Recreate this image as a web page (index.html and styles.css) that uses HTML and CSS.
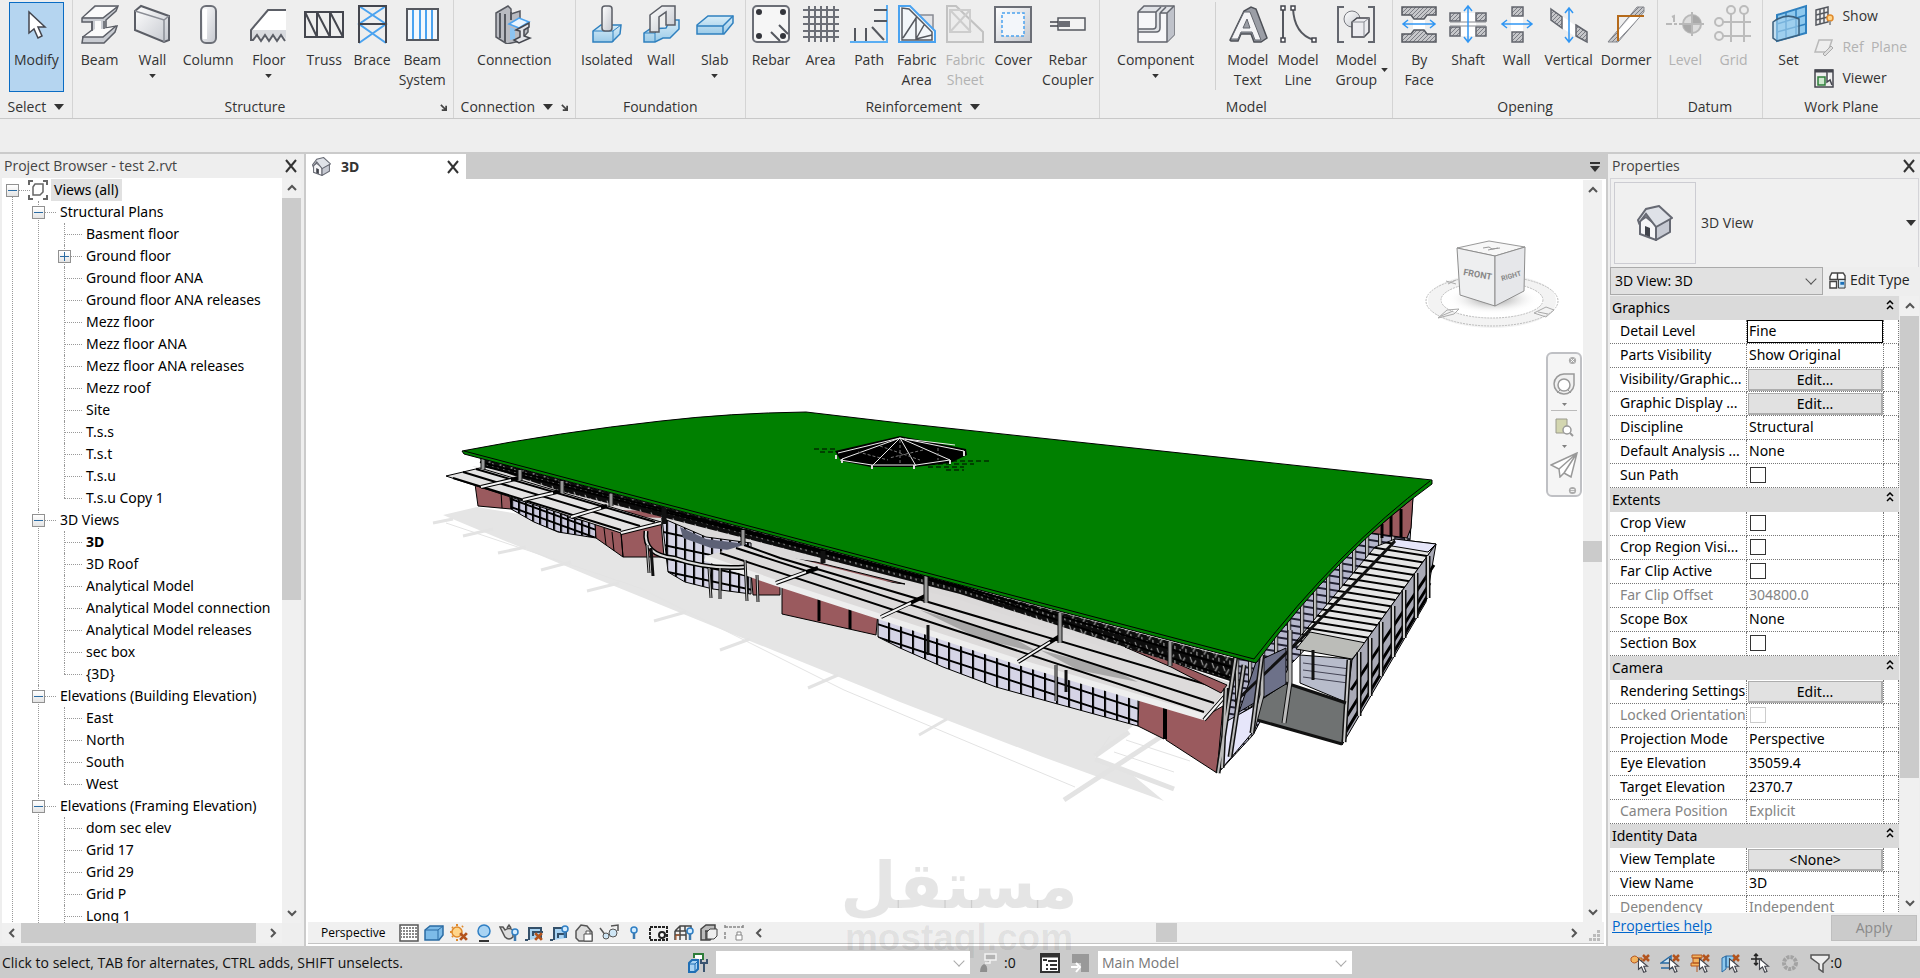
FILE: index.html
```html
<!DOCTYPE html>
<html lang="en">
<head>
  <meta charset="UTF-8">
  <meta name="viewport" content="width=device-width, initial-scale=1.0">
  <title>test 2.rvt - 3D</title>
  <link rel="stylesheet" href="styles.css">
</head>
<body>
  <svg class="defs" aria-hidden="true">
    <defs>
      <linearGradient id="metal" x1="0" y1="0" x2="1" y2="1">
        <stop offset="0" stop-color="#fff"/><stop offset="1" stop-color="#c4c7ce"/>
      </linearGradient>
      <linearGradient id="blue" x1="0" y1="0" x2="0" y2="1">
        <stop offset="0" stop-color="#d8edf8"/><stop offset="1" stop-color="#9ccbe8"/>
      </linearGradient>
      <pattern id="hatch" width="4" height="4" patternUnits="userSpaceOnUse">
        <rect width="4" height="4" fill="#c6c7ca"/><path d="M0 4L4 0" stroke="#7b7d84"/>
      </pattern>
      <symbol id="close" viewBox="0 0 14 14"><path d="M2 1l10 12M12 1L2 13" stroke="#333" stroke-width="2" fill="none"/></symbol>
      <symbol id="up" viewBox="0 0 12 12"><path d="M2 8l4-4 4 4" stroke="#555" stroke-width="2" fill="none"/></symbol>
      <symbol id="down" viewBox="0 0 12 12"><path d="M2 4l4 4 4-4" stroke="#555" stroke-width="2" fill="none"/></symbol>
      <symbol id="left" viewBox="0 0 12 12"><path d="M8 2L4 6l4 4" stroke="#555" stroke-width="2" fill="none"/></symbol>
      <symbol id="right" viewBox="0 0 12 12"><path d="M4 2l4 4-4 4" stroke="#555" stroke-width="2" fill="none"/></symbol>
      <symbol id="caret" viewBox="0 0 10 6"><path d="M0 0h10L5 6z" fill="#333"/></symbol>
      <symbol id="launch" viewBox="0 0 8 8"><path d="M1 1l5 5M7 2v5H2" stroke="#444" stroke-width="2" fill="none"/></symbol>
      <symbol id="collapse" viewBox="0 0 8 10"><path d="M1 4l3-3 3 3M1 9l3-3 3 3" stroke="#000" stroke-width="1.5" fill="none"/></symbol>
      <symbol id="house" viewBox="0 0 36 36">
        <path d="M3 16v13l16 6V20L9 12z" fill="#f6f6f8" stroke="#666973" stroke-width="2"/>
        <path d="M19 20v15l14-8V14z" fill="#c6c9d2" stroke="#666973" stroke-width="2"/>
        <path d="M1 15L9 4 22 1l13 12-16 9L9 9l-7 9z" fill="#dfe2e8" stroke="#666973" stroke-width="2"/>
        <path d="M8 21l5 2v9l-5-2z" fill="#40434b"/>
      </symbol>
      <symbol id="cursor" viewBox="0 0 16 20"><path d="M2 1v14l4-3 3 7 3-1-3-7h5z" fill="#fff" stroke="#44464e" stroke-width="1.5"/></symbol>
      <symbol id="redx" viewBox="0 0 8 8"><path d="M1 1l6 6M7 1L1 7" stroke="#b3541e" stroke-width="2.5"/></symbol>
      <symbol id="bulb" viewBox="0 0 8 14"><circle cx="4" cy="4" r="3" fill="#d3ecff" stroke="#2f7fc4" stroke-width="1.5"/><path d="M4 7v6" stroke="#3b79b0" stroke-width="2.5"/></symbol>
    </defs>
  </svg>

  <!-- Ribbon -->
  <header class="ribbon">
    <section class="panel panel-select">
      <div class="tools">
        <button class="tool active"><svg viewBox="0 0 40 40"><path d="M13 8v21l5-4 4 9 4-2-4-9h7z" fill="#fff" stroke="#44464e" stroke-width="1.5"/></svg><span>Modify</span></button>
      </div>
      <h2>Select <svg class="caret"><use href="#caret"/></svg></h2>
    </section>

    <section class="panel panel-structure">
      <div class="tools">
        <button class="tool"><svg viewBox="0 0 40 40"><path d="M2 14L15 2h23l-2 5-10 9v8l11-2-2 6-11 11H2l1-6 9-7v-8H2z" fill="#c9ccd2" stroke="#5b5e66" stroke-width="1.5"/><path d="M4 13L16 3h20L23 13zM4 33l11-8v-8h6v8l14-2-13 10z" fill="#fafafa"/><path d="M2 14h21L37 3M2 33h21l13-11M12 17v10M24 17v8" fill="none" stroke="#5b5e66" stroke-width="1.5"/></svg><span>Beam</span></button>
        <button class="tool"><svg viewBox="0 0 40 40"><path d="M3 7l6-5 28 10v24l-5 2L3 26z" fill="url(#metal)" stroke="#5b5e66" stroke-width="2"/><path d="M3 7l29 9 5-4M32 16v22" fill="none" stroke="#8b8e96" stroke-width="1.5"/></svg><span>Wall</span><svg class="drop"><use href="#caret"/></svg></button>
        <button class="tool"><svg viewBox="0 0 40 40"><rect x="13" y="2" width="15" height="37" rx="5" fill="url(#metal)" stroke="#6b6e76" stroke-width="2"/><path d="M17 5v30" stroke="#fff" stroke-width="4"/></svg><span>Column</span></button>
        <button class="tool"><svg viewBox="0 0 40 40"><path d="M2 26L18 6h19v20z" fill="#fff"/><path d="M2 26h35v9l-4-4-4 6-4-6-4 6-4-6-4 6-4-6-4 6H2z" fill="#d9dbdf"/><path d="M37 6H19L2 26v10h2l4-5 4 6 4-6 4 6 4-6 4 6 4-6 4 6" fill="none" stroke="#5b5e66" stroke-width="2"/></svg><span>Floor</span><svg class="drop"><use href="#caret"/></svg></button>
        <button class="tool"><svg viewBox="0 0 40 40"><path d="M1 8h38v25H1zM13 8v25M26 8v25M1 8l12 25M13 8l13 25M26 8l13 25" fill="none" stroke="#44464e" stroke-width="2"/></svg><span>Truss</span></button>
        <button class="tool"><svg viewBox="0 0 40 40"><path d="M7 2l27 18L7 39M34 2L7 20l27 19" fill="none" stroke="#4ba3f0" stroke-width="2"/><path d="M7 1v38M34 1v38M7 2h27M7 20h27" stroke="#44464e" stroke-width="2"/></svg><span>Brace</span></button>
        <button class="tool"><svg viewBox="0 0 40 40"><rect x="5" y="5" width="31" height="31" fill="#f4f8fc" stroke="#55585f" stroke-width="2"/><path d="M11 6v29M18 6v29M24 6v29M30 6v29" stroke="#4ba3f0" stroke-width="2"/></svg><span>Beam System</span></button>
      </div>
      <h2>Structure<svg class="launch"><use href="#launch"/></svg></h2>
    </section>

    <section class="panel panel-connection">
      <div class="tools">
        <button class="tool"><svg viewBox="0 0 40 40"><path d="M2 9l12-7 3 3v5l9-3v9l8 5v7l-8 9-13 3L2 33z" fill="#b9bbc1" stroke="#55585f" stroke-width="1.5"/><path d="M6 9v25M11 10v28M17 8v8" stroke="#55585f" stroke-width="2"/><path d="M15 20l10-6 10 4-10 6z" fill="#eaf5ff" stroke="#4ba3f0" stroke-width="1.5"/><path d="M16 23l5 2v10l-5 1z" fill="#8cc4f2"/><path d="M22 26l13-7v4l-5 3v6l6 2-11 5-5-3 6-3v-6z" fill="#e2e3e7" stroke="#44464e" stroke-width="1.5"/></svg><span>Connection</span></button>
      </div>
      <h2>Connection <svg class="caret"><use href="#caret"/></svg><svg class="launch"><use href="#launch"/></svg></h2>
    </section>

    <section class="panel panel-foundation">
      <div class="tools">
        <button class="tool"><svg viewBox="0 0 40 40"><path d="M6 27l8-6h20l-1 9-8 8H6z" fill="url(#blue)" stroke="#2f80bf" stroke-width="1.5"/><path d="M6 27h20l8-6M26 27v11" fill="none" stroke="#2f80bf"/><rect x="15" y="2" width="10" height="25" rx="3" fill="url(#metal)" stroke="#5b5e66" stroke-width="1.5"/></svg><span>Isolated</span></button>
        <button class="tool"><svg viewBox="0 0 40 40"><path d="M3 29l6-4 16-1 4-8h9v9l-9 9h-7l-8 4H3z" fill="url(#blue)" stroke="#2f80bf" stroke-width="1.5"/><path d="M3 29h11l5-5M14 29v9" fill="none" stroke="#2f80bf"/><path d="M9 11L21 2h13v19h-9V8l-7 5v15h-9z" fill="url(#metal)" stroke="#5b5e66" stroke-width="1.5"/></svg><span>Wall</span></button>
        <button class="tool"><svg viewBox="0 0 40 40"><path d="M2 21l11-9h25v7l-9 11H2z" fill="url(#blue)" stroke="#2f80bf" stroke-width="1.5"/><path d="M2 22h26l10-10M28 22v8" fill="none" stroke="#2f80bf" stroke-width="1.5"/></svg><span>Slab</span><svg class="drop"><use href="#caret"/></svg></button>
      </div>
      <h2>Foundation</h2>
    </section>

    <section class="panel panel-reinforcement">
      <div class="tools">
        <button class="tool"><svg viewBox="0 0 40 40"><rect x="2" y="2" width="36" height="36" rx="4" fill="#f6f6f6" stroke="#6b6e76" stroke-width="2"/><path d="M28 21l9 9M20 28l9 9" stroke="#55585f" stroke-width="2"/><g fill="#33353b"><circle cx="8" cy="8" r="3"/><circle cx="32" cy="8" r="3"/><circle cx="8" cy="32" r="3"/><circle cx="32" cy="32" r="3"/></g></svg><span>Rebar</span></button>
        <button class="tool"><svg viewBox="0 0 40 40"><path d="M2 6h36M2 13h36M2 20h36M2 27h36M2 33h36M8 2v36M14 2v36M20 2v36M26 2v36M33 2v36" stroke="#6b6e76" stroke-width="2"/></svg><span>Area</span></button>
        <button class="tool"><svg viewBox="0 0 40 40"><path d="M38 1v37H1" fill="none" stroke="#5aaef3" stroke-width="2"/><path d="M25 6h13M25 17h13M6 24v13M17 24v13M23 23l12 13" stroke="#55585f" stroke-width="2"/></svg><span>Path</span></button>
        <button class="tool"><svg viewBox="0 0 40 40"><path d="M17 11h19v26H17z" fill="#e4e5e8" stroke="#888b92" stroke-width="1.5"/><path d="M2 2h11l25 25v11H2z" fill="#f2f6fa" stroke="#4ba3f0" stroke-width="2"/><path d="M5 4v32h30v-8L12 5zM6 34L19 14v21L35 31M19 35l8-14" fill="none" stroke="#55585f" stroke-width="1.5"/></svg><span>Fabric Area</span></button>
        <button class="tool" disabled><svg viewBox="0 0 40 40"><path d="M2 2h9l27 26v10H2z" fill="#ececec" stroke="#c2c2c2" stroke-width="2"/><path d="M5 6h20v22H5zM5 28L25 6M6 7l20 21" fill="none" stroke="#cdcdcd" stroke-width="2"/></svg><span>Fabric Sheet</span></button>
        <button class="tool"><svg viewBox="0 0 40 40"><rect x="2" y="3" width="36" height="35" fill="url(#metal)" stroke="#6b6e76" stroke-width="2"/><rect x="9" y="9" width="22" height="23" fill="#f3f6fa" stroke="#4ba3f0" stroke-width="1.5" stroke-dasharray="3 2"/></svg><span>Cover</span></button>
        <button class="tool"><svg viewBox="0 0 40 40"><rect x="10" y="14" width="27" height="12" fill="#f3f3f3" stroke="#55585f" stroke-width="1.5"/><path d="M2 18h9M2 22h9" stroke="#44464e" stroke-width="1.5"/><rect x="10" y="17" width="12" height="6" fill="#6b6d74"/></svg><span>Rebar Coupler</span></button>
      </div>
      <h2>Reinforcement <svg class="caret"><use href="#caret"/></svg></h2>
    </section>

    <section class="panel panel-model">
      <div class="tools">
        <button class="tool"><svg viewBox="0 0 40 40"><path d="M2 8l6-6h30v29l-7 7H2z" fill="#e0e2e6" stroke="#63666e" stroke-width="1.5"/><path d="M31 10l7-8v29l-7 7z" fill="#bfc2ca"/><path d="M3 9h16v15H3zM3 28h18q3 0 3-3V10h7v27H3z" fill="#f6f6f8"/><path d="M2 8h18l5-5M20 8v14q0 3-3 3H2M24 9l6-6M24 9h7l7-7M24 9v15q0 4-4 4H2M31 9v29" fill="none" stroke="#63666e" stroke-width="1.5"/></svg><span>Component</span><svg class="drop"><use href="#caret"/></svg></button>
        <i class="split"></i>
        <button class="tool"><svg viewBox="0 0 40 40"><path d="M2 36L16 7l7-4 5 2 11 29-6 4h-7l-3-8H13l-3 7H3z" fill="#9b9ea6" stroke="#4d5057" stroke-width="1.5"/><path d="M3 35L16 8h6l11 28h-6l-3-8H13l-3 7zM15 24h7l-3-9z" fill="#f4f4f6" stroke="#63666e" fill-rule="evenodd"/></svg><span>Model Text</span></button>
        <button class="tool"><svg viewBox="0 0 40 40"><path d="M5 4v32M15 4q1 26 21 32" fill="none" stroke="#55585f" stroke-width="2"/><path d="M3 2h4v4H3zM3 34h4v4H3zM13 2h4v4h-4zM34 34h4v4h-4z" fill="#fff" stroke="#44464e" stroke-width="1.5"/></svg><span>Model Line</span></button>
        <button class="tool side"><svg viewBox="0 0 40 40"><path d="M8 3H2v35h6M32 3h6v35h-6" fill="none" stroke="#63666e" stroke-width="2"/><circle cx="16" cy="15" r="8" fill="url(#metal)" stroke="#77797f"/><path d="M16 18l5-4h12v14l-5 5H16z" fill="#ececf0" stroke="#44464e" stroke-width="1.5"/><path d="M16 18h12l5-4M28 18v15" fill="none" stroke="#888b92"/></svg><span>Model Group</span><svg class="drop"><use href="#caret"/></svg></button>
      </div>
      <h2>Model</h2>
    </section>

    <section class="panel panel-opening">
      <div class="tools">
        <button class="tool"><svg viewBox="0 0 40 40"><path d="M14 12h12v17H14z" fill="#fff"/><path d="M3 3h34v8h-9l-3 4H15l-3-4H3zM3 38h34v-8h-9l-3-4H15l-3 4H3z" fill="url(#hatch)" stroke="#55585f" stroke-width="1.5"/><path d="M5 20h30M9 16l-5 4 5 4M31 16l5 4-5 4" fill="none" stroke="#3096f3" stroke-width="1.5"/></svg><span>By<br>Face</span></button>
        <button class="tool"><svg viewBox="0 0 40 40"><path d="M12 9h16v23H12z" fill="#fff"/><path d="M2 9h10v8H2zM28 9h10v8H28zM2 23h10v9H2zM28 23h10v9H28z" fill="url(#hatch)" stroke="#63666e" stroke-width="1.5"/><path d="M2 18h36M2 22h36" stroke="#85878d"/><path d="M20 3v35M16 7l4-5 4 5M16 33l4 5 4-5" fill="none" stroke="#3096f3" stroke-width="1.5"/></svg><span>Shaft</span></button>
        <button class="tool"><svg viewBox="0 0 40 40"><path d="M14 3h12v35H14z" fill="#fff"/><path d="M15 3h11v9H15zM15 28h11v10H15z" fill="url(#hatch)" stroke="#63666e" stroke-width="1.5"/><path d="M6 20h28M10 16l-5 4 5 4M30 16l5 4-5 4" fill="none" stroke="#3096f3" stroke-width="1.5"/></svg><span>Wall</span></button>
        <button class="tool"><svg viewBox="0 0 40 40"><path d="M13 12l14 10v11L13 24z" fill="#fff"/><path d="M2 5l11 8v11L2 16zM27 21l11 7v10l-11-6z" fill="url(#hatch)" stroke="#63666e" stroke-width="1.5"/><path d="M20 5v33M16 9l4-5 4 5M16 33l4 5 4-5" fill="none" stroke="#3096f3" stroke-width="1.5"/></svg><span>Vertical</span></button>
        <button class="tool"><svg viewBox="0 0 40 40"><path d="M2 38L31 3h7v5L12 38z" fill="url(#hatch)" stroke="#85878d"/><path d="M12 27l14-16h9L13 35z" fill="#fff"/><path d="M12 37V12h26" fill="none" stroke="#b56a1a" stroke-width="2"/></svg><span>Dormer</span></button>
      </div>
      <h2>Opening</h2>
    </section>

    <section class="panel panel-datum">
      <div class="tools">
        <button class="tool" disabled><svg viewBox="0 0 40 40"><circle cx="27" cy="20" r="9" fill="#ddd" stroke="#b9b9b9" stroke-width="2"/><path d="M27 20v-9a9 9 0 019 9zM27 20v9a9 9 0 01-9-9z" fill="#a9a9a9"/><path d="M1 20h6M9 20h3M14 20h25M27 8v24M7 13l2-1v6" fill="none" stroke="#b9b9b9" stroke-width="2"/></svg><span>Level</span></button>
        <button class="tool" disabled><svg viewBox="0 0 40 40"><path d="M10 18h28M10 32h28M18 10v28M31 10v28" stroke="#bcbcbc" stroke-width="2"/><g fill="#eee" stroke="#bcbcbc" stroke-width="2"><circle cx="18" cy="6" r="4"/><circle cx="31" cy="6" r="4"/><circle cx="6" cy="18" r="4"/><circle cx="6" cy="32" r="4"/></g></svg><span>Grid</span></button>
      </div>
      <h2>Datum</h2>
    </section>

    <section class="panel panel-plane">
      <div class="tools">
        <button class="tool"><svg viewBox="0 0 40 40"><path d="M8 11l29-9v27L8 37z" fill="#8ec9ee" stroke="#2f80bf" stroke-width="2"/><path d="M8 20l29-9M8 28l29-8M17 8v26M27 5v26" stroke="#2f80bf" stroke-width="1.5"/><path d="M4 18q13-10 26-3v16L8 37l-4-3z" fill="#a9d4ee" fill-opacity=".6" stroke="#3b5f7c" stroke-width="1.5"/></svg><span>Set</span></button>
        <div class="small-tools">
          <button><svg viewBox="0 0 20 20"><path d="M2 4l12-3v15L2 19zM2 9l12-3M2 14l12-3M6 3v15M10 2v15" fill="#eee" stroke="#55585f" stroke-width="1.5"/><circle cx="16" cy="12" r="3" fill="#ffd58a" stroke="#e08a2c" stroke-width="1.5"/><path d="M16 15v4" stroke="#999" stroke-width="2"/></svg>Show</button>
          <button disabled><svg viewBox="0 0 20 20"><path d="M5 3h13l-4 12H1z" fill="#eee" stroke="#b9b9b9" stroke-width="1.5"/><path d="M9 17l8-8 2 2-8 8z" fill="#ddd" stroke="#aaa"/></svg>Ref&nbsp; Plane</button>
          <button><svg viewBox="0 0 20 20"><path d="M1 2h18v17H1z" fill="#eee" stroke="#44464e" stroke-width="1.5"/><path d="M1 3h18" stroke="#44464e" stroke-width="3"/><path d="M4 9h7v8H4z" fill="#cfe8cf" stroke="#2e7d3a" stroke-width="1.5"/><path d="M13 3v11l3-2 2 5" fill="#fff" stroke="#44464e" stroke-width="1.5"/></svg>Viewer</button>
        </div>
      </div>
      <h2>Work Plane</h2>
    </section>
  </header>
  <div class="option-bar"></div>

  <main class="workspace">
    <!-- Project browser -->
    <aside class="browser">
      <div class="title-bar"><h1>Project Browser - test 2.rvt</h1><button class="close" aria-label="Close browser"><svg><use href="#close"/></svg></button></div>
      <div class="browser-body">
        <ul class="tree">
          <li class="root">
            <button class="toggle" aria-label="Collapse"></button>
            <div class="row"><svg class="views-icon" viewBox="0 0 20 20"><path d="M1 5V1h4M15 1h4v4M19 15v4h-4M5 19H1v-4" fill="none" stroke="#666" stroke-width="2"/><path d="M5 7l2-3h8v8l-3 3H5z" fill="#fff" stroke="#666" stroke-width="1.5"/></svg><span class="selected">Views (all)</span></div>
            <ul>
              <li><button class="toggle" aria-label="Collapse"></button><div class="row">Structural Plans</div>
                <ul>
                  <li>Basment floor</li>
                  <li><button class="toggle plus" aria-label="Expand"></button>Ground floor</li>
                  <li>Ground floor ANA</li>
                  <li>Ground floor ANA releases</li>
                  <li>Mezz floor</li>
                  <li>Mezz floor ANA</li>
                  <li>Mezz floor ANA releases</li>
                  <li>Mezz roof</li>
                  <li>Site</li>
                  <li>T.s.s</li>
                  <li>T.s.t</li>
                  <li>T.s.u</li>
                  <li>T.s.u Copy 1</li>
                </ul>
              </li>
              <li><button class="toggle" aria-label="Collapse"></button><div class="row">3D Views</div>
                <ul>
                  <li><b>3D</b></li>
                  <li>3D Roof</li>
                  <li>Analytical Model</li>
                  <li>Analytical Model connection</li>
                  <li>Analytical Model releases</li>
                  <li>sec box</li>
                  <li>{3D}</li>
                </ul>
              </li>
              <li><button class="toggle" aria-label="Collapse"></button><div class="row">Elevations (Building Elevation)</div>
                <ul>
                  <li>East</li>
                  <li>North</li>
                  <li>South</li>
                  <li>West</li>
                </ul>
              </li>
              <li class="open-end"><button class="toggle" aria-label="Collapse"></button><div class="row">Elevations (Framing Elevation)</div>
                <ul>
                  <li>dom sec elev</li>
                  <li>Grid 17</li>
                  <li>Grid 29</li>
                  <li>Grid P</li>
                  <li>Long 1</li>
                </ul>
              </li>
            </ul>
          </li>
        </ul>
        <div class="vscroll"><button aria-label="Scroll up"><svg><use href="#up"/></svg></button><div class="track"><i class="thumb"></i></div><button aria-label="Scroll down"><svg><use href="#down"/></svg></button></div>
      </div>
      <div class="hscroll"><button aria-label="Scroll left"><svg><use href="#left"/></svg></button><div class="track"><i class="thumb"></i></div><button aria-label="Scroll right"><svg><use href="#right"/></svg></button></div>
    </aside>

    <!-- Drawing area -->
    <section class="view">
      <div class="tabs">
        <div class="tab"><svg class="tab-icon"><use href="#house"/></svg><b>3D</b><button class="close" aria-label="Close view"><svg><use href="#close"/></svg></button></div>
        <button class="tab-menu" aria-label="Open views"><svg viewBox="0 0 12 10"><path d="M1 1h10" stroke="#333" stroke-width="2"/><path d="M1 4h10l-5 6z" fill="#333"/></svg></button>
      </div>
      <div class="view-body">
        <div class="canvas">
          <svg class="model" viewBox="308 180 1275 742" role="img" aria-label="3D model of the building">
            <defs>
              <pattern id="glassA" width="7" height="8" patternUnits="userSpaceOnUse" patternTransform="skewY(20)"><rect width="7" height="8" fill="#000"/><path d="M2 2h5v6H2z" fill="#c9c8dc"/></pattern>
              <pattern id="glassB" width="9" height="13" patternUnits="userSpaceOnUse" patternTransform="skewY(12)"><rect width="9" height="13" fill="#000"/><path d="M2 2h7v11H2z" fill="#d5d4e6"/></pattern>
              <pattern id="glassC" width="12" height="13" patternUnits="userSpaceOnUse" patternTransform="skewY(18)"><rect width="12" height="13" fill="#000"/><path d="M2 2h10v11H2z" fill="#d5d4e6"/></pattern>
              <pattern id="slats" width="40" height="7" patternUnits="userSpaceOnUse" patternTransform="skewY(9)"><rect width="40" height="7" fill="#e6e6e6"/><path d="M0 1h40" stroke="#000" stroke-width="2"/></pattern>
              <pattern id="side" width="13" height="7" patternUnits="userSpaceOnUse" patternTransform="skewY(9)"><rect width="13" height="7" fill="#b5b6cc"/><path d="M0 1h13" stroke="#223" stroke-width="2"/><path d="M2 0v7" stroke="#111" stroke-width="4"/><path d="M2 0v7" stroke="#ccc" stroke-width="2"/></pattern>
              <pattern id="truss" width="11" height="14" patternUnits="userSpaceOnUse" patternTransform="skewY(15)"><rect width="11" height="14" fill="#0c0c0c"/><path d="M2 2l2 5M8 4l-3 6M9 9v4M3 11v2" stroke="#bbb" stroke-width="1"/></pattern>
              <radialGradient id="cubeShadow"><stop offset="0" stop-color="#888"/><stop offset="1" stop-color="#fff" stop-opacity="0"/></radialGradient>
            </defs>
            <!-- ground shadow -->
            <path d="M443 515L477 507 700 545 1140 720 1095 757 1129 772 1164 801 1043 757 900 702 871 690 592 577z" fill="#e5e5e5"/>
            <path d="M446 523L640 588 844 690 1075 787M1110 736l-12 17M1126 740l64 21M1114 752l60 20" fill="none" stroke="#e3e3e3" stroke-width="1"/>
            <path d="M433 523l20-4M463 536l30-7M498 553l28-6M541 570l30-8M587 591l32-8M654 621l32-9M720 650l30-11M808 688l30-13M919 735l28-16" fill="none" stroke="#e3e3e3" stroke-width="3"/>
            <path d="M1064 800l101-66M1095 759l79 30M1129 732l-34 24" fill="none" stroke="#e3e3e3" stroke-width="5"/>
            <!-- annex and right side -->
            <g stroke="#000">
              <path d="M1234 658L1413 495 1410 540 1353 600 1290 665 1253 735 1218 773z" fill="url(#side)"/>
              <path d="M1371 533L1413 498 1411 528 1407 538z" fill="#9a5a5e"/>
              <path d="M1382 524v14M1391 516v20M1401 509v28" stroke-width="3"/>
              <path d="M1239 715L1286 683 1346 703 1342 744 1257 720z" fill="#6f7272"/>
              <path d="M1239 712L1256 662 1286 648 1286 684z" fill="#6d7189"/>
              <path d="M1220 725l36-20-4 28-34 40z" fill="#e6e6fa"/>
              <path d="M1300 655l52 4-4 44-48-20z" fill="#b8bccb"/>
              <path d="M1303 663l47 6M1303 670l46 6M1303 677l45 6" stroke="#445" />
              <path d="M1375 547L1395 539 1436 544 1352 660 1293 645z" fill="url(#slats)"/>
              <path d="M1310 632l56 11-14 16-56-10z" fill="#bbbcb8"/>
              <path d="M1395 539l41 5-8 8-36-6z" fill="#e6e6fa"/>
              <path d="M1436 544L1426 602 1342 745 1352 660z" fill="#a9aab6"/>
            </g>
            <path d="M1434 565L1351 690M1430 583L1347 716M1428 595L1344 735" stroke="#000" stroke-width="3"/>
            <path d="M1428 556v42M1416 573v45M1404 590v48M1393 606v51M1381 622v54M1370 638v58M1359 652v64M1349 660l-5 82" stroke="#111" stroke-width="5"/>
            <path d="M1428 556v42M1416 573v45M1404 590v48M1393 606v51M1381 622v54M1370 638v58M1359 652v64M1349 660l-5 82" stroke="#ccc" stroke-width="2"/>
            <path d="M1257 720l85 24M1286 683l60 20M1313 650v30M1235 702L1300 640 1395 541" fill="none" stroke="#111" stroke-width="3"/>
            <path d="M1290 630v52l-6 41M1262 655v40l-10 38" fill="none" stroke="#111" stroke-width="5"/>
            <path d="M1290 630v52l-6 41M1262 655v40l-10 38" fill="none" stroke="#bbb" stroke-width="3"/>
            <!-- walls and glazing -->
            <g stroke="#000" stroke-width="1">
              <path d="M472 466L550 480 700 505 1232 683 1204 717 881 617 660 540z" fill="#dbd9d9" stroke="none"/>
              <path d="M475 484L510 496 511 509 478 506zM501 491l1 17" fill="#9a5a5e"/>
              <path d="M510 494L535 502 571 518 595 523 596 538 558 532 534 522 511 509z" fill="url(#glassA)"/>
              <path d="M595 522L621 533 623 557 596 538zM621 532L661 522 664 557 623 557zM604 528l2 17M612 532l2 19" fill="#9a5a5e"/>
              <path d="M617 510l44 1 0 7-40-2z" fill="#9a5a5e" stroke="none"/>
              <path d="M662 518L706 537 751 543 751 594 713 589 685 582 668 572z" fill="url(#glassB)"/>
              <path d="M680 527l26 12 41 5v8l-36-4-28-10z" fill="#5d6176" stroke="none"/>
              <path d="M751 572L780 582V595H753z" fill="#9a5a5e"/>
              <path d="M782 583L878 612 876 635 782 614z" fill="#9a5a5e"/>
              <path d="M819 595v26M850 604v25" stroke-width="3"/>
              <path d="M780 557L816 562 905 584 870 580 780 564z" fill="#9a5a5e"/>
              <path d="M878 612L1018 661 1138 696 1138 726 1054 703 996 687 943 667 900 648 878 637z" fill="url(#glassC)"/>
              <path d="M1139 697L1164 704V739L1138 726zM1166 705L1204 717 1223 706 1217 773 1166 740z" fill="#9a5a5e"/>
              <path d="M1165 704v35" stroke-width="4"/>
            </g>
            <!-- canopies -->
            <path d="M446 476L480 468 661 522 621 533z" fill="#e4e3e3" stroke="#000"/>
            <path d="M706 556L744 545 960 600 1225 687 1204 717 1018 661 881 616 776 583z" fill="#dddbdb"/>
            <path d="M705 558L776 583 881 617 1018 662 1204 717" fill="none" stroke="#eee" stroke-width="6"/>
            <path d="M920 610l90 26 30 17-60-14zM1040 650l70 18 28 14-60-12z" fill="#a9a8a8"/>
            <path d="M453 478L621 530M463 472L640 526M476 469L655 522M720 553L1204 712M736 548L1214 703M744 545L780 558L1225 690" fill="none" stroke="#000" stroke-width="2"/>
            <path d="M481 487l38-9M523 500l38-9M571 517l36-11M621 533l40-10M776 583l42-15M881 617l44-21M1018 662l42-26M1204 720l28-32" stroke="#000" stroke-width="4"/>
            <path d="M481 487l30-7M523 500l30-7M571 517l30-9M621 533l40-10M776 583l30-11M881 617l30-14M1018 662l32-20M1204 720l28-32" stroke="#f4f4f4" stroke-width="2"/>
            <path d="M1125 647l46 14 56 24-6 8-50-26z" fill="#9a5a5e" stroke="#000"/>
            <!-- roof truss -->
            <path d="M480 458L1236 659 1230 681 960 594 744 538 560 491 482 465z" fill="url(#truss)"/>
            <path d="M483 466L700 521 960 588 1232 678M480 462L960 586 1234 668" fill="none" stroke="#000" stroke-width="2"/>
            <path d="M483 459v10M520 470v10M562 481v12M611 494v12M664 508v16M743 530v15M823 551v12M926 575v28M1060 613v30M1170 642v24" stroke="#111" stroke-width="5"/>
            <path d="M483 459v10M520 470v10M562 481v12M611 494v12M743 530v15M926 575v28M1060 613v30M1170 642v24" stroke="#999" stroke-width="3"/>
            <!-- entrance canopy -->
            <path d="M646 531q-3 24 28 27 34 12 72 9" fill="none" stroke="#000" stroke-width="5"/>
            <path d="M646 531q-3 24 28 27 34 12 72 9" fill="none" stroke="#ddd" stroke-width="2"/>
            <path d="M647 545l2 28M651 548l2 28M709 568l2 30M720 568v31M745 560l2 41M757 575l1 27M928 625v30M1056 665v36M1066 670v22" stroke="#111" stroke-width="3"/>
            <path d="M647 545l2 28M709 568l2 30M720 568v31M745 560l2 41M757 575l1 27M1056 665v36" stroke="#ccc" stroke-width="1"/>
            <!-- corner columns -->
            <path d="M1236 655l-18 118M1226 688l-4 80M1244 665l-14 92M1262 655l-10 78" stroke="#111" stroke-width="5"/>
            <path d="M1236 655l-18 118M1226 688l-4 80M1244 665l-14 92M1262 655l-10 78" stroke="#bbb" stroke-width="2"/>
            <!-- roof -->
            <path d="M462 451Q560 432 661 421 730 413 806 412L900 423 1432 480V484Q1340 550 1256 663L464 454z" fill="#008000" stroke="#000"/>
            <path d="M464 451L1254 659Q1340 548 1430 481" fill="none" stroke="#000"/>
            <!-- skylight -->
            <path d="M814 449h22M820 452h14M952 461h38M930 464h44M928 467h36M946 470h18" stroke="#000" stroke-width="1" stroke-dasharray="5 3"/>
            <path d="M835 451L900 436 966 449 967 455 950 463 915 467H871L841 461z" fill="#000"/>
            <path d="M838 453L900 438 964 451M842 459l58-21 50 22M872 466l28-28 16 28M840 460l32 5h44l34-5M905 439l50 6" fill="none" stroke="#eee" stroke-width="1"/>
            <path d="M836 455v4M842 459v4M872 465v4M914 465v4M950 460v4M964 451v5" stroke="#ddd" stroke-width="2"/>
            <path d="M858 452l30 8M880 446l40 14M900 440v24M923 450l-34 8M938 448v12" stroke="#777" stroke-dasharray="3 2"/>
            <!-- view cube -->
            <ellipse cx="1492" cy="301" rx="58" ry="21" fill="none" stroke="#f3f3f3" stroke-width="12"/>
            <ellipse cx="1492" cy="301" rx="66" ry="25" fill="none" stroke="#bbb" stroke-dasharray="2 1"/>
            <ellipse cx="1492" cy="300" rx="51" ry="18" fill="#fff" stroke="#bbb" stroke-dasharray="2 1"/>
            <ellipse cx="1493" cy="299" rx="46" ry="15" fill="url(#cubeShadow)"/>
            <path d="M1457 248L1489 241 1525 247 1495 256z" fill="#f7f7f7" stroke="#999"/>
            <path d="M1457 248L1495 256V306L1460 295z" fill="#eeeff0" stroke="#8d8d8d"/>
            <path d="M1495 256L1525 247 1524 291 1495 306z" fill="#e6e7ea" stroke="#8d8d8d"/>
            <path d="M1483 248l6-1 3 2 8-1M1488 250l10-2" stroke="#999" stroke-width="1" fill="none"/>
            <path d="M1438 318l16-4 5-5-12 1zM1441 316l12-5M1534 313l12-6 8 3-8 7zM1538 312l10 2M1446 281l10 3M1448 284l8-4" fill="none" stroke="#aaa"/>
            <text class="cube-text" x="1463" y="275" transform="rotate(10 1463 275)">FRONT</text>
            <text class="cube-text small" x="1502" y="281" transform="rotate(-16 1502 281)">RIGHT</text>
          </svg>
          <div class="nav-bar">
            <button aria-label="Close navigation bar"><svg class="nav-dot" viewBox="0 0 10 10"><circle cx="5" cy="5" r="4" fill="#aaa"/><path d="M3 3l4 4M7 3L3 7" stroke="#fff"/></svg></button>
            <button aria-label="Steering wheel"><svg class="nav-icon" viewBox="0 0 24 24"><path d="M12 1h10v11A10 10 0 1112 1z" fill="#f0f0f0" stroke="#999" stroke-width="1.5"/><circle cx="12" cy="12" r="6" fill="#fff" stroke="#999" stroke-width="1.5"/><path d="M5 20l3-3M19 20l-3-3" stroke="#999"/></svg></button>
            <svg class="nav-caret"><use href="#caret"/></svg>
            <hr>
            <button aria-label="Zoom region"><svg class="nav-icon" viewBox="0 0 24 24"><path d="M4 4h11v14H4z" fill="#d3d6b0" stroke="#9a9a8c"/><circle cx="15" cy="15" r="4" fill="#fff" stroke="#999" stroke-width="1.5"/><path d="M18 18l3 3" stroke="#999" stroke-width="2"/></svg></button>
            <svg class="nav-caret"><use href="#caret"/></svg>
            <button aria-label="Fly"><svg class="nav-plane" viewBox="0 0 28 26"><path d="M1 13L27 1l-6 24-7-4-4 4-1-8zM27 1L9 17M27 1L14 21" fill="#fff" stroke="#999" stroke-width="1.5"/></svg></button>
            <button aria-label="Customize"><svg class="nav-dot" viewBox="0 0 10 10"><circle cx="5" cy="5" r="4" fill="#aaa"/><path d="M3 4h4M3 6h4" stroke="#fff"/></svg></button>
          </div>
        </div>
        <div class="vscroll"><button aria-label="Scroll up"><svg><use href="#up"/></svg></button><div class="track"><i class="thumb"></i></div><button aria-label="Scroll down"><svg><use href="#down"/></svg></button></div>
      </div>
      <div class="view-controls">
        <span class="scale">Perspective</span>
        <button aria-label="Detail level"><svg viewBox="0 0 20 20"><rect x="1" y="2" width="18" height="16" fill="#fff" stroke="#555" stroke-width="1.5"/><path d="M1 5h18M1 8h18M1 11h18M1 14h18" stroke="#888" stroke-width="2" stroke-dasharray="2 1"/></svg></button>
        <button aria-label="Visual style"><svg viewBox="0 0 20 20"><path d="M1 7l5-4h13v9l-4 5H1z" fill="#7dbbe8" stroke="#2a6ba3" stroke-width="1.5"/><path d="M1 7h13l5-4M14 7v10" fill="none" stroke="#2a6ba3"/></svg></button>
        <button aria-label="Sun path"><svg viewBox="0 0 20 20"><circle cx="8" cy="9" r="5" fill="#ffd58a" stroke="#e08a2c" stroke-width="1.5"/><path d="M8 1v2M1 9h2M3 4l1 1M13 4l1-1M3 14l1-1M8 16v2" stroke="#e08a2c" stroke-width="2"/><use href="#redx" x="10" y="9" width="9" height="9"/></svg></button>
        <button aria-label="Shadows"><svg viewBox="0 0 20 20"><circle cx="10" cy="8" r="6" fill="#a8d3f3" stroke="#2f7fc4" stroke-width="1.5"/><path d="M5 18h10" stroke="#333" stroke-width="2"/></svg></button>
        <button aria-label="Rendering dialog"><svg viewBox="0 0 20 20"><path d="M1 4h3l2 3q4-3 8 0v7q-4 4-8 0zM8 5l2-3 2 3" fill="#ddd" stroke="#555" stroke-width="1.5"/><use href="#bulb" x="12" y="5" width="8" height="14"/></svg></button>
        <button aria-label="Crop view"><svg viewBox="0 0 20 20"><path d="M1 17h3M5 17V5h12v10" fill="#a8d3f3" stroke="#34506a" stroke-width="2"/><path d="M9 13V9h10" fill="none" stroke="#34506a" stroke-width="2"/><use href="#redx" x="10" y="9" width="9" height="9"/></svg></button>
        <button aria-label="Show crop region"><svg viewBox="0 0 20 20"><path d="M1 17h3M5 17V5h12v10M9 15v-4h8" fill="#a8d3f3" stroke="#34506a" stroke-width="2"/><use href="#bulb" x="12" y="2" width="8" height="14"/></svg></button>
        <button aria-label="Lock view"><svg viewBox="0 0 20 20"><path d="M2 8l5-6 6 1 5 6v9H5l-3-3z" fill="#ddd" stroke="#555" stroke-width="1.5"/><path d="M10 11h8v7h-8zM12 11V8h4v3" fill="#fff" stroke="#555"/></svg></button>
        <button aria-label="Temporary hide"><svg viewBox="0 0 20 20"><path d="M1 5l6 8M12 3l7-1v6" fill="none" stroke="#555" stroke-width="1.5"/><circle cx="7" cy="13" r="3" fill="#cfe6f5" stroke="#555"/><circle cx="14" cy="10" r="4" fill="#cfe6f5" stroke="#555"/></svg></button>
        <button aria-label="Reveal hidden"><svg viewBox="0 0 20 20"><use href="#bulb" x="6" y="3" width="8" height="14"/></svg></button>
        <button aria-label="Temporary view"><svg viewBox="0 0 20 20"><rect x="1" y="4" width="17" height="13" fill="#eee" stroke="#222" stroke-width="2" stroke-dasharray="3 1"/><circle cx="13" cy="12" r="3" fill="#fff" stroke="#222" stroke-width="2"/></svg></button>
        <button aria-label="Analytical model"><svg viewBox="0 0 20 20"><path d="M1 8l5-5h11v8M1 8h11v9M1 8v9M6 8v9M1 12h11M6 3v5M11 3v5" fill="none" stroke="#444" stroke-width="1.5"/><path d="M2 17v-5h4" stroke="#b3541e" fill="none"/><use href="#bulb" x="12" y="4" width="8" height="14"/></svg></button>
        <button aria-label="Displacement"><svg viewBox="0 0 20 20"><path d="M2 6l5-4h9v9l-5 6H2zM6 8h9M7 8v9" fill="#bbb" stroke="#444" stroke-width="1.5"/><path d="M8 9l3-3h7v7l-3 3H8z" fill="#eee" stroke="#444"/></svg></button>
        <button aria-label="Constraints"><svg viewBox="0 0 20 20"><path d="M1 4h18M1 2v4M19 2v4M1 9v8" stroke="#888" stroke-width="1.5" stroke-dasharray="3 1"/><path d="M12 12h6v5h-6zM13 12v-3h4v3" fill="#fff" stroke="#888"/></svg></button>
        <div class="hscroll"><button aria-label="Scroll left"><svg><use href="#left"/></svg></button><div class="track"><i class="thumb"></i></div><button aria-label="Scroll right"><svg><use href="#right"/></svg></button></div>
        <svg class="grip" viewBox="0 0 12 12"><path d="M8 0h3v3H8zM4 4h3v3H4zM8 4h3v3H8zM0 8h3v3H0zM4 8h3v3H4zM8 8h3v3H8z" fill="#bbb"/></svg>
      </div>
      <div class="watermark"><span class="mark-ar" lang="ar">مستقل</span><span class="mark-en">mostaql.com</span></div>
    </section>

    <!-- Properties palette -->
    <aside class="properties">
      <div class="title-bar"><h1>Properties</h1><button class="close" aria-label="Close properties"><svg><use href="#close"/></svg></button></div>
      <div class="type-box"><div class="preview"><svg><use href="#house"/></svg></div><span>3D View</span><svg class="caret"><use href="#caret"/></svg></div>
      <div class="type-row">
        <div class="combo"><select aria-label="View"><option>3D View: 3D</option></select></div>
        <button class="edit-type"><svg viewBox="0 0 18 18"><path d="M1 5l2-4h6v7H1zM9 1h6l2 3v4H9zM1 10h7v7H1z" fill="#fff" stroke="#444" stroke-width="1.5"/><path d="M10 8h7v9h-7z" fill="#cfe6f5" stroke="#333"/><path d="M12 12h4" stroke="#1a6fb8" stroke-width="3"/></svg>Edit Type</button>
      </div>
      <div class="prop-body">
        <div class="prop-scroll">
          <table>
            <colgroup><col class="c-name"><col class="c-value"><col class="c-link"></colgroup>
            <tbody>
              <tr class="group"><th colspan="3">Graphics<svg><use href="#collapse"/></svg></th></tr>
              <tr><th><label for="detail">Detail Level</label></th><td class="focus"><input id="detail" value="Fine"></td><td></td></tr>
              <tr><th>Parts Visibility</th><td>Show Original</td><td></td></tr>
              <tr><th>Visibility/Graphic...</th><td class="btn"><button>Edit...</button></td><td></td></tr>
              <tr><th>Graphic Display ...</th><td class="btn"><button>Edit...</button></td><td></td></tr>
              <tr><th>Discipline</th><td>Structural</td><td></td></tr>
              <tr><th>Default Analysis ...</th><td>None</td><td></td></tr>
              <tr><th><label for="sun">Sun Path</label></th><td><input type="checkbox" id="sun"></td><td></td></tr>
            </tbody>
            <tbody>
              <tr class="group"><th colspan="3">Extents<svg><use href="#collapse"/></svg></th></tr>
              <tr><th><label for="crop">Crop View</label></th><td><input type="checkbox" id="crop"></td><td></td></tr>
              <tr><th><label for="cropvis">Crop Region Visi...</label></th><td><input type="checkbox" id="cropvis"></td><td></td></tr>
              <tr><th><label for="farclip">Far Clip Active</label></th><td><input type="checkbox" id="farclip"></td><td></td></tr>
              <tr class="off"><th>Far Clip Offset</th><td>304800.0</td><td></td></tr>
              <tr><th>Scope Box</th><td>None</td><td></td></tr>
              <tr><th><label for="secbox">Section Box</label></th><td><input type="checkbox" id="secbox"></td><td></td></tr>
            </tbody>
            <tbody>
              <tr class="group"><th colspan="3">Camera<svg><use href="#collapse"/></svg></th></tr>
              <tr><th>Rendering Settings</th><td class="btn"><button>Edit...</button></td><td></td></tr>
              <tr class="off"><th><label for="locked">Locked Orientation</label></th><td><input type="checkbox" id="locked" disabled></td><td></td></tr>
              <tr><th>Projection Mode</th><td>Perspective</td><td></td></tr>
              <tr><th>Eye Elevation</th><td>35059.4</td><td></td></tr>
              <tr><th>Target Elevation</th><td>2370.7</td><td></td></tr>
              <tr class="off"><th>Camera Position</th><td>Explicit</td><td></td></tr>
            </tbody>
            <tbody>
              <tr class="group"><th colspan="3">Identity Data<svg><use href="#collapse"/></svg></th></tr>
              <tr><th>View Template</th><td class="btn"><button>&lt;None&gt;</button></td><td></td></tr>
              <tr><th>View Name</th><td>3D</td><td></td></tr>
              <tr class="off"><th>Dependency</th><td>Independent</td><td></td></tr>
            </tbody>
          </table>
        </div>
        <div class="vscroll"><button aria-label="Scroll up"><svg><use href="#up"/></svg></button><div class="track"><i class="thumb"></i></div><button aria-label="Scroll down"><svg><use href="#down"/></svg></button></div>
      </div>
      <div class="prop-footer"><a href="#">Properties help</a><button disabled>Apply</button></div>
    </aside>
  </main>

  <!-- Status bar -->
  <footer class="status">
    <p>Click to select, TAB for alternates, CTRL adds, SHIFT unselects.</p>
    <div class="status-mid">
      <svg class="st-icon" viewBox="0 0 20 20"><path d="M6 5V1h9v6" fill="#fff" stroke="#2e7d3a" stroke-width="2"/><path d="M1 10l3-3h6v9l-3 3H1z" fill="#a8d3f3" stroke="#1f6fb5" stroke-width="2"/><path d="M1 11h6v8M7 11l3-3" fill="none" stroke="#1f6fb5"/><path d="M16 19v-8M13 6v4h6V6" fill="none" stroke="#3a5470" stroke-width="2"/></svg>
      <div class="combo"><select aria-label="Active workset"><option></option></select></div>
      <svg class="st-icon requests" viewBox="0 0 20 20"><path d="M7 1h11v6H7zM12 7v3H7" fill="#b4b4b4" stroke="#f4f4f4" stroke-width="1.5"/><path d="M2 19q0-6 4-8 4 1 3 8z" fill="#8e8e8e"/></svg>
      <span class="count">:0</span>
      <svg class="st-icon" viewBox="0 0 20 20"><rect x="1" y="1" width="18" height="18" fill="#fff" stroke="#333" stroke-width="2"/><path d="M1 3h18" stroke="#333" stroke-width="3"/><path d="M3 7h4M8 8h9M6 12h2M10 12h7M6 16h2M10 16h7" stroke="#333" stroke-width="2"/></svg>
      <svg class="st-icon" viewBox="0 0 20 20"><path d="M2 1h17v18H11V10H2z" fill="#999"/><path d="M1 14h7M6 10l4 4-4 5" fill="none" stroke="#fff" stroke-width="2"/></svg>
      <div class="combo main"><select aria-label="Design option" disabled><option>Main Model</option></select></div>
    </div>
    <div class="status-right">
      <svg class="st-icon" viewBox="0 0 20 20"><path d="M1 5q4-4 7 0h4v3H8q-4 4-7 0z" fill="#f3b45f" stroke="#b3541e"/><use href="#redx" x="12" y="1" width="8" height="8"/><use href="#cursor" x="7" y="5" width="12" height="15"/></svg>
      <svg class="st-icon" viewBox="0 0 20 20"><path d="M1 10L11 3v7zM1 15h12" fill="#cfe6f5" stroke="#2a6ba3" stroke-width="1.5"/><use href="#redx" x="12" y="1" width="8" height="8"/><use href="#cursor" x="8" y="5" width="12" height="15"/></svg>
      <svg class="st-icon" viewBox="0 0 20 20"><path d="M2 2h10v3H2zM3 5h8v5H3zM1 10h12v3H1zM7 13v6" fill="#f3b45f" stroke="#b3541e"/><use href="#redx" x="12" y="1" width="8" height="8"/><use href="#cursor" x="8" y="5" width="12" height="15"/></svg>
      <svg class="st-icon" viewBox="0 0 20 20"><path d="M2 5l4-2v13l-4 3zM6 3h8v11H6z" fill="#8ec9ee" stroke="#2a6ba3"/><use href="#redx" x="12" y="1" width="8" height="8"/><use href="#cursor" x="8" y="5" width="12" height="15"/></svg>
      <svg class="st-icon" viewBox="0 0 20 20"><path d="M6 1v11M1 6h11M4 3l2-2 2 2M4 10l2 2 2-2" fill="none" stroke="#222" stroke-width="1.5"/><use href="#cursor" x="8" y="5" width="12" height="15"/></svg>
      <svg class="st-icon" viewBox="0 0 20 20"><circle cx="10" cy="10" r="6" fill="none" stroke="#a3a3a3" stroke-width="4" stroke-dasharray="3 1"/></svg>
      <svg class="st-icon" viewBox="0 0 20 20"><path d="M1 2h18v3l-6 6v8l-4-3v-5L1 5z" fill="#eee" stroke="#555" stroke-width="1.5"/></svg>
      <span class="filter-count">:0</span>
    </div>
  </footer>
</body>
</html>
```
FILE: styles.css
```css
* {
  box-sizing: border-box;
  margin: 0;
  padding: 0;
}

body {
  display: flex;
  flex-direction: column;
  height: 100vh;
  overflow: hidden;
  background-color: #eeeeee;
  color: #333;
  font-family: "Open Sans", "Noto Sans", sans-serif;
  font-size: 14px;
  line-height: 20px;
}

button,
input,
select {
  font: inherit;
  color: inherit;
  background: none;
  border: none;
  border-radius: 0;
}

svg {
  display: block;
  flex-shrink: 0;
}

ul {
  list-style: none;
}

.defs {
  position: absolute;
  width: 0;
  height: 0;
}

/* Ribbon */
.ribbon {
  display: flex;
  flex-shrink: 0;
  height: 119px;
  border-bottom: 1px solid #c8c8c8;
}

.panel {
  display: flex;
  flex-direction: column;
  min-width: 0;
  border-right: 1px solid #d4d4d4;
}

.panel:last-child {
  border-right: none;
}

.panel-select { flex: 72 1 0; }
.panel-structure { flex: 382 1 0; }
.panel-connection { flex: 121 1 0; }
.panel-foundation { flex: 170 1 0; }
.panel-reinforcement { flex: 355 1 0; }
.panel-model { flex: 293 1 0; }
.panel-opening { flex: 265 1 0; }
.panel-datum { flex: 104 1 0; }
.panel-plane { flex: 158 1 0; }

.tools {
  display: grid;
  height: 92px;
  padding-top: 2px;
}

.panel-select .tools { padding-left: 9px; padding-right: 8px; }
.panel-structure .tools { grid-template-columns: 54fr 52fr 60fr 62fr 49fr 47fr 54fr 4fr; }
.panel-foundation .tools { grid-template-columns: 62fr 46fr 60fr; }
.panel-reinforcement .tools { grid-template-columns: 50fr 49fr 48fr 47fr 50fr 46fr 63fr; }
.panel-model .tools { grid-template-columns: 111fr 9fr 56fr 45fr 72fr; }
.panel-opening .tools { grid-template-columns: 52fr 46fr 51fr 53fr 62fr; }
.panel-datum .tools { grid-template-columns: 54fr 42fr 7fr; }
.panel-plane .tools { grid-template-columns: 52fr 106fr; }

.tool {
  display: flex;
  flex-direction: column;
  align-items: center;
  position: relative;
  min-width: 0;
  height: 90px;
  padding-top: 2px;
}

.tool svg {
  width: 40px;
  height: 40px;
}

.tool span {
  margin-top: 6px;
  text-align: center;
}

.tool .drop {
  width: 7px;
  height: 4px;
  margin-top: 4px;
}

.tool.side .drop {
  position: absolute;
  right: 4px;
  top: 62px;
}

.tool.side span {
  width: 50px;
}

.tool.active {
  background-color: #b5d5f0;
  border: 1px solid #0a6cc4;
  padding-top: 1px;
}

.tool:disabled,
.small-tools button:disabled {
  color: #b2b2b2;
}

.split {
  width: 1px;
  height: 88px;
  margin-left: 4px;
  background-color: #d0d0d0;
}

.small-tools {
  display: flex;
  flex-direction: column;
  align-items: flex-start;
  gap: 11px;
  padding-top: 4px;
}

.small-tools button {
  display: flex;
  align-items: center;
  gap: 8px;
  white-space: nowrap;
}

.small-tools svg {
  width: 20px;
  height: 20px;
}

.panel h2 {
  display: flex;
  align-items: center;
  justify-content: center;
  gap: 8px;
  position: relative;
  height: 26px;
  padding-top: 4px;
  font-size: 14px;
  font-weight: normal;
}

.panel-structure h2 {
  padding-right: 16px;
}

.caret {
  width: 10px;
  height: 6px;
}

.launch {
  width: 7px;
  height: 7px;
}

.panel-structure .launch {
  position: absolute;
  right: 6px;
  top: 12px;
}

.option-bar {
  flex-shrink: 0;
  height: 35px;
  border-bottom: 2px solid #cbcbcb;
}

/* Workspace */
.workspace {
  display: flex;
  flex: 1;
  min-height: 0;
}

.title-bar {
  display: flex;
  align-items: center;
  justify-content: space-between;
  flex-shrink: 0;
  height: 24px;
  padding: 0 6px 0 4px;
}

.title-bar h1 {
  font-size: 14px;
  font-weight: normal;
  color: #444;
}

.close svg {
  width: 14px;
  height: 14px;
}

/* Scroll bars */
.vscroll,
.hscroll {
  display: flex;
  background-color: #f0f0f0;
}

.vscroll {
  flex-direction: column;
  flex-shrink: 0;
  width: 19px;
}

.track {
  display: flex;
  flex: 1;
}

.vscroll .track {
  flex-direction: column;
}

.vscroll button,
.hscroll button {
  display: flex;
  align-items: center;
  justify-content: center;
  width: 19px;
  height: 20px;
}

.vscroll button svg,
.hscroll button svg {
  width: 12px;
  height: 12px;
}

.thumb {
  display: block;
  background-color: #cbcbcb;
}

/* Project browser */
.browser {
  display: flex;
  flex-direction: column;
  flex-shrink: 0;
  width: 306px;
  padding-bottom: 3px;
  border-right: 2px solid #cbcbcb;
}

.browser-body {
  display: flex;
  flex: 1;
  min-height: 0;
  margin: 0 3px 0 2px;
}

.browser .vscroll .thumb {
  height: 57%;
}

.browser .hscroll {
  height: 20px;
  margin: 0 22px 0 2px;
}

.browser .hscroll .thumb {
  width: 97%;
}

.tree {
  flex: 1;
  min-width: 0;
  overflow: hidden;
  padding: 1px 0 0 10px;
  background-color: #fff;
  color: #000;
  font-family: "Noto Sans", sans-serif;
}

.tree li {
  position: relative;
  padding-left: 22px;
  min-height: 22px;
  line-height: 22px;
  white-space: nowrap;
}

.tree ul {
  margin-left: 4px;
}

.tree li::before {
  content: "";
  position: absolute;
  top: 11px;
  left: 0;
  width: 18px;
  border-top: 1px dotted #999;
}

.tree li::after {
  content: "";
  position: absolute;
  top: 0;
  left: 0;
  height: 100%;
  border-left: 1px dotted #999;
}

.tree ul ul li:last-child::after {
  height: 11px;
}

.tree .open-end li:last-child::after {
  height: 100%;
}

.tree .root::after {
  top: 11px;
}

.row {
  display: flex;
  align-items: center;
  height: 22px;
}

.root > .row {
  margin-left: -6px;
}

.views-icon {
  width: 20px;
  height: 20px;
}

.selected {
  margin-left: 3px;
  padding: 0 4px 0 3px;
  background-color: #e1e1e1;
}

.toggle {
  position: absolute;
  z-index: 1;
  top: 5px;
  left: -6px;
  width: 13px;
  height: 13px;
  border: 1px solid #919191;
  background: linear-gradient(#fff, #e4e4e4);
}

.toggle::before {
  content: "";
  position: absolute;
  top: 5px;
  left: 1px;
  width: 9px;
  height: 1px;
  background-color: #2a6ba3;
}

.toggle.plus::after {
  content: "";
  position: absolute;
  top: 1px;
  left: 5px;
  width: 1px;
  height: 9px;
  background-color: #2a6ba3;
}

/* Drawing area */
.view {
  display: flex;
  flex-direction: column;
  flex: 1;
  min-width: 0;
  position: relative;
  background-color: #fff;
}

.tabs {
  display: flex;
  align-items: center;
  justify-content: space-between;
  flex-shrink: 0;
  height: 25px;
  padding-right: 5px;
  background-color: #cbcbcb;
}

.tab {
  display: flex;
  align-items: center;
  width: 160px;
  height: 25px;
  padding: 0 6px;
  background-color: #fff;
}

.tab b {
  flex: 1;
  margin-left: 10px;
  font-family: "Noto Sans", sans-serif;
}

.tab-icon {
  width: 19px;
  height: 19px;
}

.tab-menu svg {
  width: 12px;
  height: 10px;
}

.view-body {
  display: flex;
  flex: 1;
  min-height: 0;
  padding: 1px 4px 0 2px;
}

.canvas {
  flex: 1;
  min-width: 0;
  position: relative;
}

.model {
  width: 100%;
  height: 100%;
}

.cube-text {
  font-family: Roboto, sans-serif;
  font-size: 9px;
  font-weight: bold;
  fill: #888;
}

.cube-text.small {
  font-size: 7px;
}

.view-body .track {
  justify-content: center;
}

.view-body .thumb {
  height: 21px;
}

.nav-bar {
  display: flex;
  flex-direction: column;
  align-items: center;
  position: absolute;
  top: 172px;
  right: 1px;
  width: 36px;
  height: 145px;
  padding: 2px 3px;
  border: 2px solid #bfc0c4;
  border-radius: 6px;
  background-color: #f5f5f5;
}

.nav-bar button:first-child,
.nav-bar button:last-child {
  align-self: flex-end;
}

.nav-dot {
  width: 9px;
  height: 9px;
}

.nav-icon {
  width: 24px;
  height: 24px;
  margin: 8px 0 6px;
}

.nav-caret {
  width: 5px;
  height: 3px;
  opacity: 0.6;
}

.nav-bar hr {
  width: 26px;
  margin-top: 4px;
  margin-bottom: -4px;
  border: none;
  border-top: 1px solid #bbb;
}

.nav-plane {
  width: 28px;
  height: 26px;
  margin: 4px 0 8px;
}

.view-controls {
  display: flex;
  align-items: center;
  flex-shrink: 0;
  height: 22px;
  margin: 0 2px 2px;
  background-color: #f0f0f0;
  border-bottom: 1px solid #c4c4c4;
  color: #000;
}

.view-controls .scale {
  width: 91px;
  padding-left: 13px;
  font-size: 12px;
}

.view-controls > button {
  width: 25px;
}

.view-controls > button svg {
  width: 20px;
  height: 20px;
}

.view-controls .hscroll {
  flex: 1;
  align-items: center;
}

.view-controls .track {
  height: 19px;
  justify-content: center;
}

.view-controls .thumb {
  width: 21px;
}

.grip {
  width: 12px;
  height: 12px;
  margin: 6px 3px 0 6px;
}

.watermark {
  display: flex;
  flex-direction: column;
  align-items: center;
  position: absolute;
  left: 536px;
  bottom: -10px;
  width: 234px;
  color: rgba(0, 0, 0, 0.1);
  font-weight: bold;
  pointer-events: none;
}

.mark-ar {
  font-family: "DejaVu Sans", sans-serif;
  font-size: 65px;
  line-height: 66px;
}

.mark-en {
  color: rgba(0, 0, 0, 0.07);
  font-family: "Liberation Sans", sans-serif;
  font-size: 37px;
  line-height: 37px;
}

/* Properties */
.properties {
  display: flex;
  flex-direction: column;
  flex-shrink: 0;
  width: 314px;
  padding: 0 1px 0 2px;
  border-left: 2px solid #cbcbcb;
}

.properties .title-bar {
  padding: 0 3px 0 2px;
}

.type-box {
  display: flex;
  align-items: center;
  flex-shrink: 0;
  height: 89px;
  padding: 3px 2px 3px 3px;
  border: 1px solid #d4d4d8;
  border-bottom: none;
  background-color: #f0f0f0;
}

.preview {
  display: flex;
  align-items: center;
  justify-content: center;
  width: 82px;
  height: 82px;
  border: 1px solid #ccccd2;
}

.preview svg {
  width: 36px;
  height: 36px;
}

.type-box span {
  flex: 1;
  padding-left: 5px;
}

.type-row {
  display: flex;
  flex-shrink: 0;
  height: 29px;
}

/* Drop-downs */
.combo {
  position: relative;
  width: 213px;
  height: 28px;
  border: 1px solid #aaa;
  background-color: #e1e1e1;
  color: #000;
}

.combo select {
  width: 100%;
  height: 100%;
  padding-left: 4px;
  appearance: none;
}

.combo::after {
  content: "";
  position: absolute;
  top: 50%;
  right: 7px;
  width: 7px;
  height: 7px;
  margin-top: -6px;
  border-right: 1px solid #555;
  border-bottom: 1px solid #555;
  transform: rotate(45deg);
  pointer-events: none;
}

.edit-type {
  display: flex;
  align-items: center;
  gap: 4px;
  height: 26px;
  margin-left: 6px;
  color: #222;
  white-space: nowrap;
}

.edit-type svg {
  width: 17px;
  height: 17px;
}

.prop-body {
  display: flex;
  flex: 1;
  min-height: 0;
  font-family: "Noto Sans", sans-serif;
}

.prop-scroll {
  flex: 1;
  min-width: 0;
  overflow: hidden;
  background-color: #fff;
}

.properties table {
  width: 100%;
  table-layout: fixed;
  border-collapse: separate;
  border-spacing: 0;
  color: #000;
}

.c-name { width: 137px; }
.c-link { width: 15px; }

.properties tr {
  height: 24px;
}

.properties th,
.properties td {
  height: 24px;
  padding: 0 0 2px 2px;
  border-right: 1px dotted #777;
  border-bottom: 1px dotted #777;
  font-weight: normal;
  line-height: 20px;
  text-align: left;
  white-space: nowrap;
  overflow: hidden;
}

.properties th {
  padding-left: 10px;
}

.properties .group th {
  position: relative;
  padding: 0 0 0 2px;
  border: none;
  background-color: #dadada;
}

.group svg {
  position: absolute;
  top: 4px;
  right: 5px;
  width: 8px;
  height: 10px;
}

.properties .off {
  color: #848484;
}

.properties .focus {
  padding: 0;
}

.focus input {
  display: block;
  width: 100%;
  height: 23px;
  padding: 0 0 2px 1px;
  border: 1px solid #000;
}

.properties .btn {
  padding: 1px 0 0 1px;
}

.btn button {
  display: block;
  width: 100%;
  height: 22px;
  border: 1px solid #adadad;
  border-right-width: 2px;
  border-bottom-width: 2px;
  background-color: #e1e1e1;
  line-height: 18px;
}

.properties input[type="checkbox"] {
  display: block;
  width: 16px;
  height: 16px;
  margin: 1px 0 0 1px;
  appearance: none;
  border: 1px solid #333;
  background-color: #fff;
}

.properties input[type="checkbox"]:disabled {
  border-color: #ccc;
}

.prop-body .vscroll {
  margin-left: 1px;
}

.prop-body .thumb {
  height: 80%;
}

.prop-footer {
  display: flex;
  justify-content: space-between;
  flex-shrink: 0;
  height: 33px;
  padding: 2px 2px 5px;
}

.prop-footer a {
  color: #0066cc;
  line-height: 22px;
}

.prop-footer button {
  width: 86px;
  height: 26px;
  border: 1px solid #bfbfbf;
  background-color: #cbcbcb;
  color: #8a8a8a;
}

/* Status bar */
.status {
  display: flex;
  align-items: center;
  flex-shrink: 0;
  height: 32px;
  padding: 1px 2px 0;
  background-color: #cbcbcb;
  color: #111;
}

.status p {
  width: 686px;
}

.status-mid,
.status-right {
  display: flex;
  align-items: center;
}

.status .combo {
  width: 254px;
  height: 23px;
  margin-left: 8px;
  border: none;
  background-color: #fff;
}

.status .combo::after {
  border-color: #aaa;
}

.status .main select {
  color: #777;
  opacity: 1;
}

.st-icon {
  width: 20px;
  height: 20px;
}

.requests {
  margin-left: 8px;
}

.count {
  width: 36px;
  margin-left: 6px;
}

.status-mid .st-icon + .st-icon {
  margin-left: 10px;
}

.status-right {
  gap: 10px;
  margin-left: auto;
  padding-right: 76px;
}

.filter-count {
  margin-left: -10px;
}
```
